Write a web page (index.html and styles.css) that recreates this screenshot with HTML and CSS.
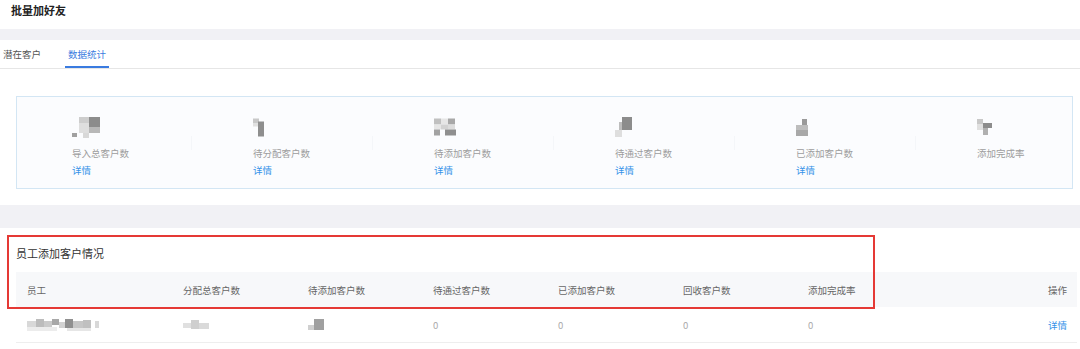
FILE: index.html
```html
<!DOCTYPE html>
<html lang="zh-CN">
<head>
<meta charset="utf-8">
<title>批量加好友</title>
<link rel="stylesheet" href="styles.css">
</head>
<body>
<header class="page-title">批量加好友</header>
<div class="band band-top"></div>
<nav class="tabs">
  <span class="tab">潜在客户</span>
  <span class="tab active">数据统计</span>
</nav>

<section class="stats-wrap">
  <div class="stats">
    <div class="stat first">
      <div class="stat-body">
        <svg class="mosaic" width="28" height="21" viewBox="0 0 28 21">
          <rect x="7" y="0" width="10" height="6" fill="#cdcdcd"/>
          <rect x="17" y="0" width="11" height="10" fill="#8c8c8c"/>
          <rect x="7" y="6" width="10" height="10" fill="#dedede"/>
          <rect x="17" y="10" width="11" height="6" fill="#b8b8b8"/>
          <rect x="0" y="16" width="5" height="4" fill="#a0a0a0"/>
          <rect x="11" y="16" width="6" height="5" fill="#d8d8d8"/>
        </svg>
        <div class="stat-label">导入总客户数</div>
        <a class="link">详情</a>
      </div>
    </div>
    <div class="stat">
      <span class="sep"></span>
      <div class="stat-body">
        <svg class="mosaic" width="12" height="18" viewBox="0 0 12 18">
          <rect x="0" y="0" width="6" height="5" fill="#c8c8c8"/>
          <rect x="5" y="3" width="6" height="15" fill="#8e8e8e"/>
          <rect x="0" y="5" width="5" height="3" fill="#e0e0e0"/>
        </svg>
        <div class="stat-label">待分配客户数</div>
        <a class="link">详情</a>
      </div>
    </div>
    <div class="stat">
      <span class="sep"></span>
      <div class="stat-body">
        <svg class="mosaic" width="22" height="18" viewBox="0 0 22 18">
          <rect x="0" y="0" width="7" height="6" fill="#c0c0c0"/>
          <rect x="7" y="0" width="7" height="6" fill="#e6e6e6"/>
          <rect x="14" y="0" width="7" height="6" fill="#a8a8a8"/>
          <rect x="0" y="6" width="7" height="5" fill="#e6e6e6"/>
          <rect x="7" y="6" width="7" height="5" fill="#d2d2d2"/>
          <rect x="14" y="6" width="7" height="5" fill="#dcdcdc"/>
          <rect x="0" y="11" width="6" height="6" fill="#a2a2a2"/>
          <rect x="11" y="11" width="11" height="6" fill="#8f8f8f"/>
        </svg>
        <div class="stat-label">待添加客户数</div>
        <a class="link">详情</a>
      </div>
    </div>
    <div class="stat">
      <span class="sep"></span>
      <div class="stat-body">
        <svg class="mosaic" width="18" height="21" viewBox="0 0 18 21">
          <rect x="7" y="0" width="10" height="13" fill="#8c8c8c"/>
          <rect x="4" y="5" width="3" height="8" fill="#bdbdbd"/>
          <rect x="0" y="13" width="7" height="7" fill="#dedede"/>
        </svg>
        <div class="stat-label">待通过客户数</div>
        <a class="link">详情</a>
      </div>
    </div>
    <div class="stat">
      <span class="sep"></span>
      <div class="stat-body">
        <svg class="mosaic" width="12" height="17" viewBox="0 0 12 17">
          <rect x="6" y="0" width="5" height="6" fill="#9a9a9a"/>
          <rect x="0" y="6" width="12" height="5" fill="#bdbdbd"/>
          <rect x="0" y="11" width="12" height="6" fill="#a8a8a8"/>
        </svg>
        <div class="stat-label">已添加客户数</div>
        <a class="link">详情</a>
      </div>
    </div>
    <div class="stat">
      <span class="sep"></span>
      <div class="stat-body">
        <svg class="mosaic" width="16" height="17" viewBox="0 0 16 17">
          <rect x="0" y="0" width="6" height="5" fill="#c8c8c8"/>
          <rect x="6" y="4" width="9" height="5" fill="#8c8c8c"/>
          <rect x="0" y="5" width="6" height="6" fill="#e0e0e0"/>
          <rect x="6" y="9" width="5" height="7" fill="#b0b0b0"/>
        </svg>
        <div class="stat-label">添加完成率</div>
      </div>
    </div>
  </div>
</section>

<div class="band band-mid"></div>

<section class="staff">
  <h2 class="staff-title">员工添加客户情况</h2>
  <div class="table">
    <div class="tr thead">
      <div class="td">员工</div>
      <div class="td">分配总客户数</div>
      <div class="td">待添加客户数</div>
      <div class="td">待通过客户数</div>
      <div class="td">已添加客户数</div>
      <div class="td">回收客户数</div>
      <div class="td">添加完成率</div>
      <div class="td right">操作</div>
    </div>
    <div class="tr trow">
      <div class="td">
        <svg class="mosaic-row" width="74" height="12" viewBox="0 0 74 12">
          <rect x="0" y="2" width="9" height="6" fill="#d8d8d8"/>
          <rect x="9" y="0" width="8" height="8" fill="#bcbcbc"/>
          <rect x="17" y="2" width="8" height="7" fill="#cacaca"/>
          <rect x="25" y="0" width="7" height="6" fill="#a8a8a8"/>
          <rect x="32" y="3" width="6" height="6" fill="#d2d2d2"/>
          <rect x="38" y="0" width="8" height="9" fill="#909090"/>
          <rect x="46" y="2" width="10" height="8" fill="#c6c6c6"/>
          <rect x="56" y="1" width="8" height="8" fill="#c0c0c0"/>
          <rect x="68" y="2" width="4" height="7" fill="#d8d8d8"/>
          <rect x="0" y="8" width="30" height="4" fill="#ececec"/>
          <rect x="40" y="9" width="24" height="3" fill="#e6e6e6"/>
        </svg>
      </div>
      <div class="td">
        <svg class="mosaic-row" width="26" height="11" viewBox="0 0 26 11">
          <rect x="0" y="4" width="8" height="5" fill="#e0e0e0"/>
          <rect x="8" y="1" width="8" height="9" fill="#cfcfcf"/>
          <rect x="16" y="4" width="10" height="6" fill="#dadada"/>
        </svg>
      </div>
      <div class="td">
        <svg class="mosaic-row" width="16" height="11" viewBox="0 0 16 11">
          <rect x="0" y="6" width="6" height="5" fill="#d0d0d0"/>
          <rect x="6" y="0" width="10" height="11" fill="#a0a0a0"/>
        </svg>
      </div>
      <div class="td muted">0</div>
      <div class="td muted">0</div>
      <div class="td muted">0</div>
      <div class="td muted">0</div>
      <div class="td right"><a class="link">详情</a></div>
    </div>
  </div>
  <div class="highlight"></div>
</section>
</body>
</html>
```

FILE: styles.css
```css
* { box-sizing: border-box; }

html, body {
  margin: 0;
  padding: 0;
  background: #ffffff;
  font-family: "Noto Sans CJK SC", "Noto Sans", sans-serif;
  color: #333;
  overflow: hidden;
}

.page-title {
  height: 29px;
  padding-left: 11px;
  font-size: 11px;
  font-weight: 700;
  line-height: 20px;
  color: #222;
}

.band {
  background: #f1f1f5;
}
.band-top { height: 11px; }
.band-mid { height: 23px; }

.tabs {
  display: flex;
  gap: 21px;
  height: 29px;
  border-bottom: 1px solid #e6e6e6;
}
.tab {
  padding: 0 3px;
  height: 28px;
  line-height: 29px;
  font-size: 9.5px;
  color: #555;
}
.tab.active {
  color: #3a7be0;
  border-bottom: 2px solid #3a7be0;
}

.stats-wrap {
  padding: 27px 7px 16px 16px;
}
.stats {
  display: grid;
  grid-template-columns: 174px repeat(4, 181px) 1fr;
  height: 93px;
  border: 1px solid #d3e6f4;
  background: #fbfcfe;
}
.stat {
  display: flex;
  align-items: flex-start;
}
.sep {
  width: 1px;
  height: 14px;
  margin-top: 39px;
  background: #f4f6f9;
  flex: none;
}
.stat-body {
  padding-top: 20px;
  margin-left: 61px;
  display: flex;
  flex-direction: column;
  align-items: flex-start;
}
.stat.first .stat-body { margin-left: 55px; }
.mosaic {
  display: block;
  height: 21px;
}
.stat-label {
  margin-top: 8px;
  font-size: 9.5px;
  line-height: 14px;
  color: #9d9d9d;
}
.link {
  font-size: 9.5px;
  line-height: 14px;
  color: #3592e8;
  cursor: pointer;
}
.stat-label + .link { margin-top: 3px; }

.staff {
  position: relative;
  padding: 17px 3px 0 16px;
}
.staff-title {
  margin: 0 0 11px;
  font-size: 11px;
  font-weight: 400;
  line-height: 16px;
  color: #333;
}
.tr {
  display: grid;
  grid-template-columns: 156px repeat(6, 125px) 1fr;
  align-items: center;
}
.thead {
  height: 35px;
  background: #f7f8fa;
  font-size: 9.5px;
  color: #666;
}
.trow {
  height: 36px;
  border-bottom: 1px solid #eeeeee;
  font-size: 9.5px;
}
.td {
  padding: 0 11px;
  white-space: nowrap;
}
.td.right {
  text-align: right;
  padding-right: 10px;
}
.muted { color: #aaaaaa; }
.mosaic-row { display: block; }

.highlight {
  position: absolute;
  left: 7px;
  top: 7px;
  width: 868px;
  height: 74px;
  border: 2px solid #e53935;
  pointer-events: none;
}
```
